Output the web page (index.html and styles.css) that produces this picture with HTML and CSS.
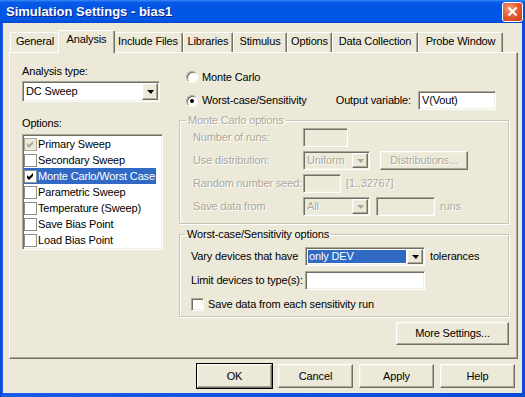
FILE: index.html
```html
<!DOCTYPE html>
<html lang="en">
<head>
  <meta charset="UTF-8">
  <meta name="viewport" content="width=device-width, initial-scale=1.0">
  <title>Simulation Settings - bias1</title>
  <link rel="stylesheet" href="styles.css">
</head>
<body>
  <div class="window">
    <!-- Title bar -->
    <div class="titlebar">
      <span class="title">Simulation Settings - bias1</span>
      <button class="close">
        <svg width="11" height="11" viewBox="0 0 11 11"><path d="M1.5 1.5 L9.5 9.5 M9.5 1.5 L1.5 9.5" stroke="#fff" stroke-width="2"/></svg>
      </button>
    </div>

    <div class="client">
      <!-- Tabs -->
      <div class="tabs">
        <div class="tab">General</div>
        <div class="tab active">Analysis</div>
        <div class="tab">Include Files</div>
        <div class="tab">Libraries</div>
        <div class="tab">Stimulus</div>
        <div class="tab">Options</div>
        <div class="tab">Data Collection</div>
        <div class="tab">Probe Window</div>
      </div>

      <div class="panel">
        <!-- Left column -->
        <div class="left-col">
          <div class="caption">Analysis type:</div>
          <div class="combo sunken type-combo">
            <span class="combo-text">DC Sweep</span>
            <span class="arrow-btn raised"><span class="arrow"></span></span>
          </div>
          <div class="caption options-caption">Options:</div>
          <ul class="listbox sunken">
            <li><span class="item"><span class="box grey"><svg width="7" height="7" viewBox="0 0 7 7"><polygon points="0,2 2,4 6,0 6,3 2,7 0,5" fill="#aca899"/></svg></span>Primary Sweep</span></li>
            <li><span class="item"><span class="box"></span>Secondary Sweep</span></li>
            <li><span class="item selected"><span class="box"><svg width="7" height="7" viewBox="0 0 7 7"><polygon points="0,2 2,4 6,0 6,3 2,7 0,5" fill="#000"/></svg></span>Monte Carlo/Worst Case</span></li>
            <li><span class="item"><span class="box"></span>Parametric Sweep</span></li>
            <li><span class="item"><span class="box"></span>Temperature (Sweep)</span></li>
            <li><span class="item"><span class="box"></span>Save Bias Point</span></li>
            <li><span class="item"><span class="box"></span>Load Bias Point</span></li>
          </ul>
        </div>

        <!-- Right column -->
        <div class="right-col">
          <div class="radio-row">
            <span class="radio"></span>Monte Carlo
          </div>
          <div class="radio-row second">
            <span class="radio on"></span>Worst-case/Sensitivity
            <span class="out-label">Output variable:</span>
            <span class="field sunken out-field">V(Vout)</span>
          </div>

          <fieldset class="group mc-group disabled">
            <legend>Monte Carlo options</legend>
            <div class="row">
              <span class="row-label">Number of runs:</span>
              <span class="field sunken runs-field"></span>
            </div>
            <div class="row">
              <span class="row-label">Use distribution:</span>
              <div class="combo sunken small-combo">
                <span class="combo-text">Uniform</span>
                <span class="arrow-btn raised"><span class="arrow"></span></span>
              </div>
              <span class="btn raised dist-btn">Distributions...</span>
            </div>
            <div class="row">
              <span class="row-label">Random number seed:</span>
              <span class="field sunken seed-field"></span>
              <span class="hint">[1..32767]</span>
            </div>
            <div class="row">
              <span class="row-label">Save data from</span>
              <div class="combo sunken small-combo">
                <span class="combo-text">All</span>
                <span class="arrow-btn raised"><span class="arrow"></span></span>
              </div>
              <span class="field sunken count-field"></span>
              <span class="hint">runs</span>
            </div>
          </fieldset>

          <fieldset class="group wc-group">
            <legend>Worst-case/Sensitivity options</legend>
            <div class="row">
              <span class="row-label">Vary devices that have</span>
              <div class="combo sunken wide-combo">
                <span class="combo-text highlighted">only DEV</span>
                <span class="arrow-btn raised"><span class="arrow"></span></span>
              </div>
              <span class="hint">tolerances</span>
            </div>
            <div class="row">
              <span class="row-label">Limit devices to type(s):</span>
              <span class="field sunken type-field"></span>
            </div>
            <div class="check-row">
              <span class="checkbox sunken"></span>Save data from each sensitivity run
            </div>
          </fieldset>

          <div class="more-row">
            <span class="btn raised more-btn">More Settings...</span>
          </div>
        </div>
      </div>

      <!-- Dialog buttons -->
      <div class="buttons">
        <span class="btn raised default">OK</span>
        <span class="btn raised">Cancel</span>
        <span class="btn raised">Apply</span>
        <span class="btn raised">Help</span>
      </div>
    </div>
  </div>
</body>
</html>
```

FILE: styles.css
```css
/* General */
* {
  box-sizing: border-box;
}
body {
  margin: 0;
  font-family: "Liberation Sans", Arial, sans-serif;
  font-size: 11px;
  line-height: 13px;
  letter-spacing: -0.15px;
  color: #000;
  background: #ece9d8;
}

/* 3D borders (classic look) */
.sunken {
  border: 1px solid;
  border-color: #aca899 #fff #fff #aca899;
  box-shadow: inset 1px 1px #716f64, inset -1px -1px #f1efe2;
  background: #fff;
}
.raised {
  border: 1px solid;
  border-color: #fff #716f64 #716f64 #fff;
  box-shadow: inset -1px -1px #aca899, inset 1px 1px #f1efe2;
  background: #ece9d8;
}

/* Window frame */
.window {
  width: 525px;
  height: 397px;
  display: flex;
  flex-direction: column;
  background: linear-gradient(90deg, #0a3fc8, #1a5ae8 2px, #0a4ad8);
}
.titlebar {
  height: 23px;
  flex: none;
  display: flex;
  align-items: center;
  justify-content: space-between;
  padding: 0 2px 0 6px;
  background: linear-gradient(#3a8af7 0, #0a5ae9 10%, #0054e3 40%, #0157e6 85%, #0345cc 100%);
}
.title {
  color: #fff;
  font-weight: bold;
  font-size: 13px;
  letter-spacing: 0;
  text-shadow: 1px 1px #0f1e89;
}
.close {
  width: 21px;
  height: 20px;
  padding: 0;
  border: 1px solid #fff;
  border-radius: 3px;
  background: radial-gradient(circle at 35% 30%, #f29a78, #e2562c 55%, #c53c14);
  display: flex;
  align-items: center;
  justify-content: center;
}
.client {
  flex: 1;
  margin: 0 3px 4px;
  background: #ece9d8;
  display: flex;
  flex-direction: column;
}

/* Tabs */
.tabs {
  display: flex;
  align-items: flex-end;
  height: 22px;
  margin: 7px 0 0 7px;
}
.tab {
  height: 20px;
  padding-top: 2px;
  text-align: center;
  border: 1px solid #fff;
  border-right-color: #716f64;
  border-bottom: none;
  border-radius: 2px 2px 0 0;
  box-shadow: inset -1px 0 #aca899;
  white-space: nowrap;
}
.tab:nth-child(1) { width: 50px; }
.tab:nth-child(2) { width: 57px; }
.tab:nth-child(3) { width: 70px; }
.tab:nth-child(4) { width: 50px; }
.tab:nth-child(5) { width: 54px; }
.tab:nth-child(6) { width: 45px; }
.tab:nth-child(7) { width: 86px; }
.tab:nth-child(8) { width: 85px; }
.tab.active {
  height: 23px;
  margin: 0 -2px -1px;
  position: relative;
  z-index: 1;
  background: #ece9d8;
}

/* Tab panel */
.panel {
  height: 307px;
  margin: 0 4px 0 6px;
  display: flex;
  padding: 12px 8px 0 12px;
  border: 1px solid;
  border-color: #fff #716f64 #716f64 #fff;
  box-shadow: inset -1px -1px #aca899;
}

/* Left column */
.left-col {
  width: 141px;
  flex: none;
  margin-right: 16px;
}
.caption {
  height: 13px;
}
.type-combo {
  margin-top: 3px;
  width: 138px;
  height: 21px;
}
.options-caption {
  margin-top: 15px;
}
.listbox {
  margin: 4px 0 0;
  padding: 1px;
  list-style: none;
  height: 116px;
  overflow: hidden;
}
.listbox li {
  height: 16px;
  display: flex;
  align-items: center;
}
.item {
  display: inline-flex;
  align-items: center;
  height: 16px;
  padding-right: 1px;
  white-space: nowrap;
}
.item.selected {
  background: #316ac5;
  color: #fff;
}
.box {
  width: 13px;
  height: 13px;
  margin-right: 1px;
  border: 1px solid #8f8f8a;
  background: #fff;
  display: flex;
  align-items: center;
  justify-content: center;
}
.box.grey {
  background: #ece9d8;
  border-color: #aca899;
}

/* Combo boxes */
.combo {
  display: flex;
  padding: 1px;
}
.combo-text {
  flex: 1;
  padding-left: 2px;
  display: flex;
  align-items: center;
  white-space: nowrap;
}
.combo-text.highlighted {
  margin: 1px;
  padding-left: 1px;
  background: #316ac5;
  color: #fff;
}
.arrow-btn {
  width: 16px;
  display: flex;
  align-items: center;
  justify-content: center;
}
.arrow {
  width: 0;
  height: 0;
  border-top: 4px solid #000;
  border-left: 4px solid transparent;
  border-right: 3px solid transparent;
}

/* Right column */
.right-col {
  flex: 1;
}
.radio-row {
  display: flex;
  align-items: center;
  height: 14px;
  margin-top: 5px;
  padding-left: 7px;
  white-space: nowrap;
}
.radio-row.second {
  height: 19px;
  margin-top: 7px;
}
.radio {
  width: 12px;
  height: 12px;
  margin-right: 4px;
  border-radius: 50%;
  border: 1px solid;
  border-color: #aca899 #fff #fff #aca899;
  box-shadow: inset 1px 1px #716f64;
  background: #fff;
  display: flex;
  align-items: center;
  justify-content: center;
}
.radio.on::after {
  content: "";
  width: 4px;
  height: 4px;
  border-radius: 50%;
  background: #000;
}
.out-label {
  margin-left: auto;
  margin-right: 7px;
}
.out-field {
  width: 78px;
  height: 19px;
  margin-right: 13px;
  padding: 2px 0 0 3px;
}

/* Group boxes */
.group {
  margin: 4px 0 0;
  padding: 1px 0 7px 13px;
  border: 1px solid #c9c6b6;
  box-shadow: inset 1px 1px #fff, 1px 1px #fff;
}
.group legend {
  padding: 0 2px;
  margin-left: -7px;
}
.wc-group {
  padding: 6px 0 5px 11px;
}
.wc-group legend {
  margin-left: -6px;
}
.row {
  display: flex;
  align-items: center;
  height: 19px;
  white-space: nowrap;
}
.row + .row {
  margin-top: 4px;
}
.wc-group .row + .row {
  margin-top: 5px;
}
.row-label {
  width: 110px;
  flex: none;
}
.wc-group .row-label {
  width: 114px;
}
.field {
  height: 19px;
}
.runs-field {
  width: 45px;
}
.seed-field {
  width: 38px;
}
.count-field {
  width: 59px;
  margin-left: 6px;
}
.type-field {
  width: 120px;
}
.small-combo {
  width: 67px;
  height: 19px;
}
.wide-combo {
  width: 120px;
  height: 19px;
}
.hint {
  margin-left: 5px;
}
.dist-btn {
  width: 88px;
  height: 19px;
  margin-left: 10px;
}
.check-row {
  display: flex;
  align-items: center;
  height: 14px;
  margin-top: 7px;
  white-space: nowrap;
}
.checkbox {
  width: 13px;
  height: 13px;
  margin-right: 4px;
}

/* Disabled group */
.disabled {
  color: #aca899;
  text-shadow: 1px 1px #fff;
}
.disabled .sunken {
  background: #ece9d8;
}
.disabled .arrow {
  border-top-color: #aca899;
}

/* Buttons */
.btn {
  display: flex;
  align-items: center;
  justify-content: center;
}
.more-row {
  display: flex;
  justify-content: flex-end;
  margin-top: 5px;
}
.more-btn {
  width: 113px;
  height: 23px;
}
.buttons {
  display: flex;
  justify-content: flex-end;
  gap: 6px;
  margin: 5px 7px 0 0;
}
.buttons .btn {
  width: 75px;
  height: 24px;
}
.buttons .default {
  outline: 1px solid #000;
}
```
